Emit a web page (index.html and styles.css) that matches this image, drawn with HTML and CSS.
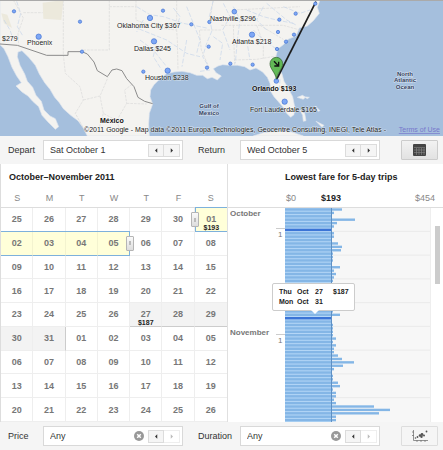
FILE: index.html
```
<!DOCTYPE html>
<html lang="en">
<head>
<meta charset="utf-8">
<title>Flight Explorer</title>
<link rel="stylesheet" href="styles.css">
</head>
<body>
<svg class="map" viewBox="0 0 443 136" role="img" aria-label="Fare map">
  <rect class="sea" width="443" height="136"/>
  <g transform="scale(.33333)">
    <path class="land" d="M0 0H960L952 22 958 40 940 62 922 78 898 84 888 108 864 118 850 134 834 146 828 168 834 196 846 222 852 244 864 264 878 290 884 320 882 344 872 352 860 340 850 322 836 306 822 290 812 274 810 250 802 232 788 216 768 204 750 210 734 200 712 196 690 196 668 194 654 198 640 206 648 218 664 228 652 240 636 232 622 236 608 226 590 226 570 218 546 214 522 216 498 222 480 236 462 254 452 270 450 290 458 312 448 340 446 372 448 408H262L250 384 234 362 212 346 190 326 178 308 164 292 150 268 134 248 118 222 106 196 86 172 66 152 54 156 52 170 60 196 74 222 82 244 98 262 108 286 124 304 132 330 150 348 166 356 176 380 166 388 144 366 126 346 116 320 98 304 84 288 66 276 48 258 64 248 50 228 36 202 24 170 12 146 0 134Z"/>
    <path class="land" d="M760 408L790 398 830 393 875 396 910 408ZM892 292L908 286 916 292 910 298ZM900 330L914 340 918 362 910 364 908 346ZM912 290L928 292 922 296ZM946 318L960 332 954 334ZM948 364L972 376 966 382Z"/>
    <path class="desert" d="M128 8L190 0 184 60 130 56ZM4 40L22 44 36 84 12 70Z"/>
    <path class="state" d="M40 0L70 54 54 100 56 134M70 38H128M190 0V164M328 0V150H250M328 20H408V60L470 84 530 90M530 0V92L532 120 534 210M408 0V22M598 90L604 150 628 204M600 90H664M640 0L628 70M700 76L704 196M770 76L790 130V176M704 180L770 178 830 168M664 76H850L906 92M780 76L850 118M700 30L900 20"/>
    <path class="state" d="M190 164L196 220 240 260 250 300 226 340 250 384M250 300L300 288 324 232M300 288L310 340 350 362 380 310 374 270 400 250M310 340L296 390M380 310L440 312M350 362L366 408"/>
    <path class="river" d="M640 0L628 50 636 92 620 130 608 170 626 200M410 20L450 44 490 50 550 70 620 84M400 80L440 96 500 120 560 160 600 170M470 120L460 170 484 208M420 120L460 150 500 200M560 20L580 70 600 120 590 160M700 20L720 60 712 120 706 190M740 30L790 50 830 60 880 70M760 90L790 120 828 146M670 10L690 50 668 90 690 150M850 20L900 40 930 30M800 10L860 60 890 76M50 4L62 40 52 80 70 110M12 60L30 90 40 120M830 200L840 240 838 270M600 214L630 210M430 60L410 96M520 24L540 50 530 80M560 120L546 200M740 120L750 180M640 110L668 130 660 180M790 20L770 60 800 90"/>
    <path class="border" d="M0 132L52 136 140 166H204V155H246L262 162 282 186 292 212 322 230 336 210 350 207 366 212 380 236 402 260 414 292 434 304 458 311"/>
    <path class="route" d="M829 240L948 5"/>
    <g class="dots">
      <circle cx="42" cy="34" r="5"/><circle cx="240" cy="65" r="5"/><circle cx="116" cy="110" r="8"/><circle cx="246" cy="155" r="5"/>
      <circle cx="489" cy="32" r="5"/><circle cx="450" cy="54" r="8"/><circle cx="574" cy="73" r="5"/><circle cx="628" cy="66" r="5"/>
      <circle cx="462" cy="124" r="8"/><circle cx="626" cy="140" r="5"/><circle cx="430" cy="215" r="5"/><circle cx="503" cy="212" r="8"/>
      <circle cx="621" cy="203" r="5"/><circle cx="703" cy="35" r="7"/><circle cx="756" cy="104" r="8"/><circle cx="838" cy="59" r="5"/>
      <circle cx="887" cy="41" r="5"/><circle cx="834" cy="96" r="5"/><circle cx="882" cy="104" r="5"/><circle cx="858" cy="125" r="5"/>
      <circle cx="831" cy="147" r="5"/><circle cx="691" cy="191" r="5"/><circle cx="758" cy="194" r="5"/><circle cx="829" cy="243" r="7"/>
      <circle cx="854" cy="305" r="8"/><circle cx="946" cy="11" r="5"/>
    </g>
    <path class="pin" d="M829 238C826 216 810 208 810 191A19 19 0 0 1 848 191C848 208 832 216 829 238Z"/>
    <path class="arrow" d="M822 184L835 197M836 185V198H823"/>
  </g>
  <g class="labels">
    <text x="2" y="41">$279</text>
    <text x="27" y="45">Phoenix</text>
    <text x="117" y="28">Oklahoma City $367</text>
    <text x="210" y="21">Nashville $296</text>
    <text x="134" y="51">Dallas $245</text>
    <text x="232" y="44">Atlanta $218</text>
    <text x="145" y="80">Houston $238</text>
    <text class="strong" x="252" y="91">Orlando $193</text>
    <text x="250" y="112">Fort Lauderdale $165</text>
    <text class="strong" x="100" y="123">México</text>
    <g class="water">
      <text x="209" y="108">Gulf of</text><text x="209" y="115">Mexico</text>
      <text x="405" y="76">North</text><text x="405" y="82">Atlantic</text><text x="405" y="89">Ocean</text>
    </g>
    <text x="84" y="132">©2011 Google - Map data ©2011 Europa Technologies, Geocentre Consulting, INEGI, Tele Atlas -</text>
    <a href="#terms"><text class="terms" x="440" y="132">Terms of Use</text></a>
  </g>
  <path class="edge" d="M0 .5H443"/>
</svg>

<form class="bar">
  <label for="depart">Depart</label>
  <div class="field">
    <input id="depart" value="Sat October 1">
    <button type="button" aria-label="Earlier departure"><svg viewBox="0 0 4 6"><path d="M3 0V6L0 3Z"/></svg></button>
    <button type="button" aria-label="Later departure"><svg viewBox="0 0 4 6"><path d="M1 0V6L4 3Z"/></svg></button>
  </div>
  <label class="second" for="return">Return</label>
  <div class="field">
    <input id="return" value="Wed October 5">
    <button type="button" aria-label="Earlier return"><svg viewBox="0 0 4 6"><path d="M3 0V6L0 3Z"/></svg></button>
    <button type="button" aria-label="Later return"><svg viewBox="0 0 4 6"><path d="M1 0V6L4 3Z"/></svg></button>
  </div>
  <button class="view" type="button" aria-label="Calendar view">
    <svg width="13" height="12" viewBox="0 0 13 12"><rect width="13" height="12" rx="1" fill="#444"/><path d="M1 3.5H12M1 6H12M1 8.500H12M3.500 4V11M6 4V11M8.500 4V11M11 4V11" stroke="#8a8a8a" stroke-width=".6"/></svg>
  </button>
</form>

<main>
  <section class="calendar">
    <h2>October–November 2011</h2>
    <table>
      <thead><tr><th>S</th><th>M</th><th>T</th><th>W</th><th>T</th><th>F</th><th>S</th></tr></thead>
      <tbody>
        <tr><td>25</td><td>26</td><td>27</td><td>28</td><td>29</td><td>30</td><td class="trip first">01<small>$193</small><i class="handle start"></i></td></tr>
        <tr><td class="trip">02</td><td class="trip">03</td><td class="trip">04</td><td class="trip last">05<i class="handle end"></i></td><td>06</td><td>07</td><td>08</td></tr>
        <tr><td>09</td><td>10</td><td>11</td><td>12</td><td>13</td><td>14</td><td>15</td></tr>
        <tr><td>16</td><td>17</td><td>18</td><td>19</td><td>20</td><td>21</td><td>22</td></tr>
        <tr><td>23</td><td>24</td><td>25</td><td>26</td><td class="hover month-end">27<small>$187</small></td><td class="hover month-end">28</td><td class="hover month-end">29</td></tr>
        <tr><td class="hover">30</td><td class="hover month-side">31</td><td>01</td><td>02</td><td>03</td><td>04</td><td>05</td></tr>
        <tr><td>06</td><td>07</td><td>08</td><td>09</td><td>10</td><td>11</td><td>12</td></tr>
        <tr><td>13</td><td>14</td><td>15</td><td>16</td><td>17</td><td>18</td><td>19</td></tr>
        <tr><td>20</td><td>21</td><td>22</td><td>23</td><td>24</td><td>25</td><td>26</td></tr>
      </tbody>
    </table>
  </section>
  <section class="fares">
    <h2>Lowest fare for 5-day trips</h2>
    <div class="scale"><span>$0</span><strong>$193</strong><span>$454</span></div>
    <div class="plot">
      <div class="months">
        <b class="october">October</b><b class="november">November</b>
        <span class="tick" data-day="6">1</span><span class="tick" data-day="37">1</span>
      </div>
      <svg class="chart" viewBox="0 0 145 214" preserveAspectRatio="none" role="img" aria-label="Lowest fare by departure day"></svg>
      <div class="track"><div class="thumb"></div></div>
      <div class="tip">
        <span>Thu</span><span>Oct</span><span>27</span><span>$187</span>
        <span>Mon</span><span>Oct</span><span>31</span>
      </div>
    </div>
  </section>
</main>

<form class="bar">
  <label for="price">Price</label>
  <div class="field">
    <input id="price" value="Any">
    <button class="clear" type="button" aria-label="Clear price"><svg viewBox="0 0 10 10"><circle cx="5" cy="5" r="5"/><path d="M3.200 3.200L6.800 6.800M6.800 3.200L3.200 6.800"/></svg></button>
    <button type="button" aria-label="Lower price"><svg viewBox="0 0 4 6"><path d="M3 0V6L0 3Z"/></svg></button>
    <button type="button" disabled aria-label="Higher price"><svg viewBox="0 0 4 6"><path d="M1 0V6L4 3Z"/></svg></button>
  </div>
  <label class="second" for="duration">Duration</label>
  <div class="field">
    <input id="duration" value="Any">
    <button class="clear" type="button" aria-label="Clear duration"><svg viewBox="0 0 10 10"><circle cx="5" cy="5" r="5"/><path d="M3.200 3.200L6.800 6.800M6.800 3.200L3.200 6.800"/></svg></button>
    <button type="button" aria-label="Shorter"><svg viewBox="0 0 4 6"><path d="M3 0V6L0 3Z"/></svg></button>
    <button type="button" disabled aria-label="Longer"><svg viewBox="0 0 4 6"><path d="M1 0V6L4 3Z"/></svg></button>
  </div>
  <button class="view flat" type="button" aria-label="Scatter plot view">
    <svg width="16" height="12" viewBox="0 0 16 12"><path d="M1.500 0V10.500H16M0 2H2M0 5.500H2M5 10V12M9 10V12M13 10V12" fill="none" stroke="#777" stroke-width=".8"/><g fill="#555"><circle cx="3.500" cy="8" r=".8"/><circle cx="5.500" cy="7" r=".9"/><circle cx="8" cy="5.500" r="1.300"/><circle cx="10" cy="4.500" r="1.400"/><circle cx="9.500" cy="6.800" r="1.200"/><circle cx="12" cy="5.500" r="1"/><circle cx="14.500" cy="1.500" r=".9"/></g></svg>
  </button>
</form>
<script src="chart.js"></script>
</body>
</html>
```
FILE: styles.css
```
* { box-sizing: border-box; }
body {
  margin: 0;
  min-height: 100vh;
  display: flex;
  flex-direction: column;
  background: #fff;
  color: #333;
  font: 9px/12px "Liberation Sans", Arial, sans-serif;
}
button, input { font: inherit; color: inherit; margin: 0; padding: 0; }

.map { display: block; width: 100%; height: auto; }
.sea { fill: #a5bfdd; }
.land { fill: #f4f3f0; stroke: #dfe6ee; stroke-width: 2; }
.desert { fill: #ece9dc; }
.state { fill: none; stroke: #dadada; stroke-width: 2; stroke-dasharray: 8 3; }
.river { fill: none; stroke: #c6d5ea; stroke-width: 2; stroke-dasharray: 14 5; }
.border { fill: none; stroke: #8b8b8b; stroke-width: 3; }
.route { stroke: #1d1d1d; stroke-width: 5; }
.dots circle { fill: #7da7f5; stroke: #3f6fd0; stroke-width: 2; }
.pin { fill: #62b956; stroke: #2c5a28; stroke-width: 2; }
.arrow { fill: none; stroke: #111; stroke-width: 4; }
.edge { stroke: #aaa; }
.labels { font-size: 7px; fill: #222; paint-order: stroke; stroke: #ffffff90; stroke-width: 1px; }
.strong { font-weight: bold; fill: #111; }
.water { font-size: 6px; font-weight: bold; fill: #33415f; text-anchor: middle; }
.terms { fill: #7777cc; text-anchor: end; text-decoration: underline; stroke: none; }

.bar {
  display: grid;
  grid-template-columns: 35px minmax(0, 1fr) 57px minmax(0, 1fr) 58px;
  align-items: center;
  height: 28px;
  padding: 0 5px 0 8px;
  background: #f5f5f5;
}
.second { padding-left: 15px; }
.field {
  display: flex;
  align-items: center;
  height: 20px;
  padding: 0 2px 0 6px;
  border: 1px solid #d9d9d9;
  background: #fff;
}
.field input { flex: 1; width: 0; min-width: 0; border: 0; outline: 0; background: none; }
.field button {
  display: grid;
  place-items: center;
  width: 16px;
  height: 13px;
  border: 1px solid #dcdcdc;
  background: #f5f5f5;
}
.field button + button { border-left: 0; }
.field svg { width: 3px; height: 5px; fill: #333; }
.field button:disabled { background: #fff; border-color: #eee; }
.field button:disabled svg { fill: #bbb; }
.field .clear { width: 10px; margin-right: 4px; border: 0; background: none; }
.field .clear + button { border-left: 1px solid #dcdcdc; }
.field .clear svg { width: 10px; height: 10px; fill: #999; }
.clear path { stroke: #fff; stroke-width: 1.5px; }
.view {
  display: grid;
  place-items: center;
  justify-self: end;
  width: 37px;
  height: 20px;
  border: 1px solid #ccc;
  border-radius: 1px;
  background: linear-gradient(#f2f2f2, #e2e2e2);
}
.flat { border-color: #ddd; background: #f5f5f5; }

main { flex: 1; display: grid; grid-template-columns: 228fr 215fr; }
section { display: flex; flex-direction: column; }
h2 { margin: 0; padding: 7px 8px 6px; font-size: 9px; line-height: 12px; color: #222; }
.calendar { border-right: 1px solid #e0e0e0; border-left: 1px solid #ddd; }
table { width: 100%; flex: 1; table-layout: fixed; border-collapse: separate; border-spacing: 0; }
th { height: 19px; padding: 0; border-bottom: 1px solid #ddd; color: #888; font-weight: normal; }
td {
  position: relative;
  height: 23px;
  padding: 0;
  border-right: 1px solid #eee;
  border-bottom: 1px solid #eee;
  text-align: center;
  font-weight: bold;
  color: #777;
}
td:last-child { border-right: 0; }
td small { position: absolute; inset: auto 0 0; font-size: 7px; line-height: 7px; color: #222; }
.trip { background: #ffffd9; border-right-color: #f3f3cf; border-bottom-color: #7db1dc; box-shadow: 0 -1px #7db1dc; }
.first { border-left: 1px solid #7db1dc; }
.last { border-right-color: #7db1dc; }
.hover { background: #f3f3f3; }
.month-end { border-bottom-color: #ccc; }
.month-side { border-right-color: #ccc; }
.handle {
  position: absolute;
  z-index: 1;
  top: 4px;
  width: 8px;
  height: 15px;
  border: 1px solid #b5b5b5;
  border-radius: 1px;
  background: linear-gradient(#bbb, #bbb) center / 2px 4px no-repeat, linear-gradient(#fafafa, #ddd);
}
.start { left: -5px; }
.end { right: -5px; }

.fares h2 { padding-left: 57px; }
.scale {
  display: grid;
  grid-template-columns: 35px 1fr auto;
  height: 19px;
  padding: 0 8px 0 58px;
  border-bottom: 1px solid #ddd;
  line-height: 18px;
  color: #888;
}
.scale strong { color: #222; }
.plot { position: relative; flex: 1; display: grid; grid-template-columns: 57px 1fr 13px; }
.months { position: relative; display: flex; flex-direction: column; padding-left: 2px; font-size: 8px; color: #777; }
.november { margin-top: 107px; }
.tick { position: absolute; right: 0; width: 9px; padding-left: 2px; border-top: 1px solid #ccc; }
.chart { display: block; width: 100%; height: 100%; min-height: 0; }
.track { border-left: 1px solid #eee; padding: 18px 3px 0 4px; }
.thumb { height: 58px; width: 5px; background: #ccc; }
.tip {
  position: absolute;
  top: 75px;
  left: 44px;
  display: grid;
  grid-template-columns: 18px 18px 18px auto;
  width: 83px;
  padding: 3px 6px;
  border: 1px solid #ccc;
  border-radius: 2px;
  background: #fff;
  font-size: 7px;
  line-height: 10px;
  font-weight: bold;
  color: #222;
}
.tip::after {
  content: "";
  position: absolute;
  top: 100%;
  left: 38px;
  border: 4px solid transparent;
  border-top-color: #fff;
  border-bottom: 0;
}
```
FILE: chart.js
```
const lengths = [
  57, 49, 47, 70, 52, 49, 47, 49, 49, 47, 53, 57, 56, 48, 48, 48, 47, 55, 49, 51, 49,
  48, 51, 48, 48, 49, 48, 48, 49, 48, 48, 55, 46, 47, 48, 48, 48, 48, 51, 48, 51, 49,
  49, 53, 57, 69, 58, 49, 47, 48, 48, 53, 55, 48, 51, 51, 49, 51, 89, 105, 94, 51, 51
];
const selected = [6, 32];
const step = 214 / lengths.length;
const chart = document.querySelector(".chart");

function add(x, y, width, height, fill) {
  const rect = document.createElementNS("http://www.w3.org/2000/svg", "rect");
  Object.entries({ x, y, width, height, fill }).forEach(([name, value]) => rect.setAttribute(name, value));
  chart.append(rect);
}

add(0, 0, 145, 214, "#f7f7f7");
for (let week = 1; week < 9; week++) add(0, week * 7 * step - 1, 145, 1, "#eaeaea");
add(0, 0, 47, 214, "#b5d7f7");
lengths.forEach((length, day) => {
  const chosen = selected.includes(day);
  add(0, day * step + 0.3, length, 2.4, chosen ? "#3b74d6" : "#84b6e6");
});
add(46, 0, 1, 214, "#5f90c4");

document.querySelectorAll(".tick").forEach(tick => {
  tick.style.top = (tick.dataset.day / lengths.length) * 100 + "%";
});
```
